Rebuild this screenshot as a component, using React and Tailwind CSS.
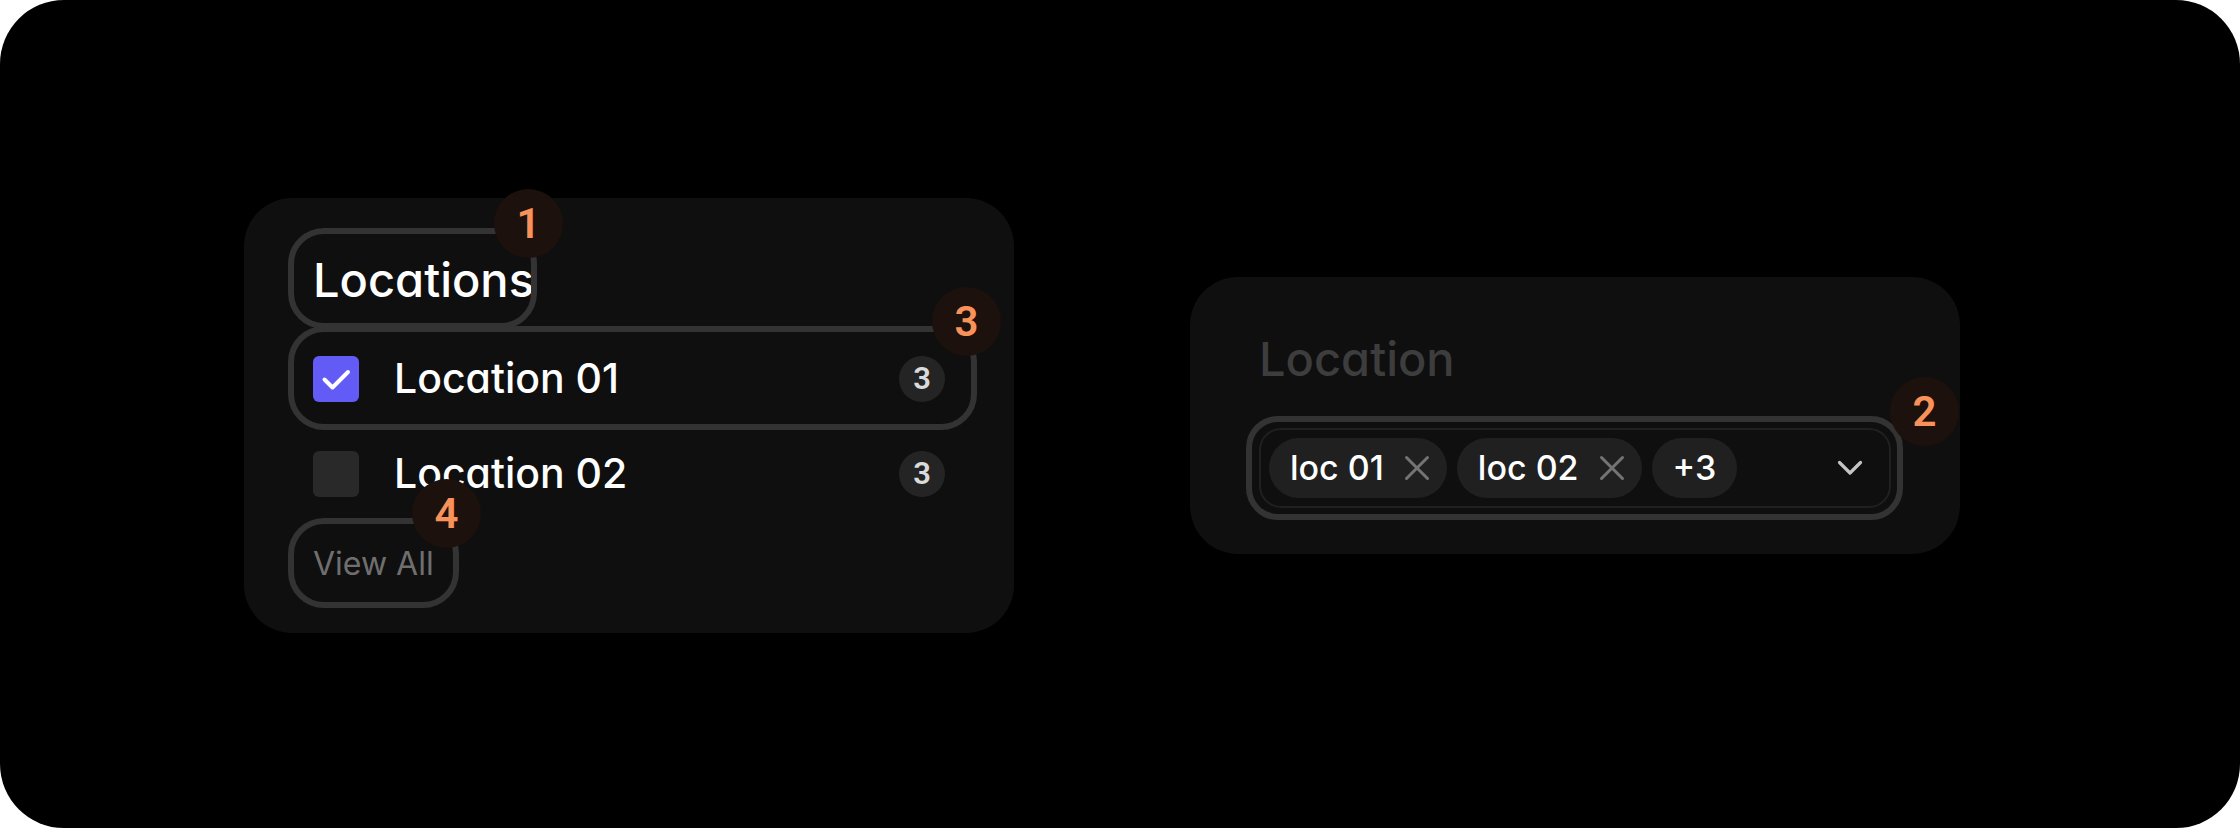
import React, { useState } from 'react';

const LOCATIONS = [
    { id: 'loc-01', name: 'Location 01', count: 3 },
    { id: 'loc-02', name: 'Location 02', count: 3 }
];

const Marker = ({ children, className }) => (
    <span
        className={`absolute -top-[45px] z-10 w-[69px] h-[69px] rounded-full bg-[#1c110c] text-[#f9925a] font-[Roboto,sans-serif] text-[42px] leading-none font-semibold flex items-center justify-center pt-[2px] ${className}`}
    >
        {children}
    </span>
);

const LocationRow = ({ location, checked, onToggle }) => (
    <div className="flex-1 flex items-center justify-between">
        <label htmlFor={location.id} className="flex items-center gap-[35px] text-[41px] leading-none font-medium text-white">
            <span className="relative flex">
                <input
                    id={location.id}
                    type="checkbox"
                    checked={checked}
                    onChange={onToggle}
                    className="appearance-none w-[46px] h-[46px] rounded-md bg-[#292929] checked:bg-[#635bf6]"
                />
                {checked && (
                    <svg className="absolute inset-0 pointer-events-none" width="46" height="46" viewBox="0 0 46 46" fill="none">
                        <path d="M11.5 23.5L19.5 31.5L35 16" stroke="white" strokeWidth="4" strokeLinecap="round" strokeLinejoin="round" />
                    </svg>
                )}
            </span>
            {location.name}
        </label>
        <span className="w-[46px] h-[46px] rounded-full bg-[#242424] text-[#dadada] font-[Roboto,sans-serif] text-[31px] leading-none font-semibold flex items-center justify-center">
            {location.count}
        </span>
    </div>
);

const Chip = ({ label, onRemove }) => (
    <span className={`h-[60px] flex items-center gap-5 rounded-full bg-[#202020] text-[34px] leading-none font-medium text-white ${onRemove ? 'pl-[21px] pr-[17px]' : 'px-[21px]'}`}>
        {label}
        {onRemove && (
            <button type="button" aria-label={`Remove ${label}`} onClick={onRemove}>
                <svg width="26" height="26" viewBox="0 0 26 26" fill="none">
                    <path d="M2.5 2.5L23.5 23.5M23.5 2.5L2.5 23.5" stroke="#747474" strokeWidth="3" strokeLinecap="round" />
                </svg>
            </button>
        )}
    </span>
);

const FilterCard = () => {
    const [selected, setSelected] = useState(['loc-01']);

    const toggle = (id) => {
        setSelected(prev => prev.includes(id) ? prev.filter(s => s !== id) : [...prev, id]);
    };

    return (
        <section className="rounded-[48px] bg-[#0f0f0f] pt-[30px] pb-[25px] pl-11 pr-[37px] flex flex-col items-start">
            {/* Title */}
            <div className="relative h-[101px] w-[249px] rounded-[36px] border-6 border-[#333333] flex items-center pl-[19px] pt-[2px]">
                <h2 className="w-full overflow-x-clip text-[47px] leading-none font-medium text-white">Locations</h2>
                <Marker className="-right-8">1</Marker>
            </div>

            {/* Options */}
            <div className="relative -mt-[3px] h-[104px] w-full rounded-[36px] border-6 border-[#333333] flex pl-[19px] pr-[26px] pt-[2px]">
                <LocationRow
                    location={LOCATIONS[0]}
                    checked={selected.includes(LOCATIONS[0].id)}
                    onToggle={() => toggle(LOCATIONS[0].id)}
                />
                <Marker className="-right-[30px]">3</Marker>
            </div>
            <div className="h-[88px] w-full flex pl-[25px] pr-8">
                <LocationRow
                    location={LOCATIONS[1]}
                    checked={selected.includes(LOCATIONS[1].id)}
                    onToggle={() => toggle(LOCATIONS[1].id)}
                />
            </div>

            <div className="relative h-[90px] w-[171px] rounded-[36px] border-6 border-[#333333] flex items-center pl-[19px] pt-[2px]">
                <button type="button" className="text-[32px] leading-none text-[#6f6f6f] whitespace-nowrap">View All</button>
                <Marker className="-right-7">4</Marker>
            </div>
        </section>
    );
};

const SelectCard = () => {
    const [chips, setChips] = useState(['loc 01', 'loc 02']);

    return (
        <section className="rounded-[48px] bg-[#0f0f0f] pt-[58px] pb-[34px] pl-14 pr-[57px]">
            <h2 className="pl-[13px] text-[47px] leading-[48px] font-medium text-[#3d3d3d]">Location</h2>
            <div className="relative mt-[33px] rounded-[32px] border-6 border-[#333333] p-[6px] pl-[7px]">
                <div className="h-20 rounded-[22px] border-2 border-[#202020] flex items-center gap-[10px] pl-2 pr-[26px]">
                    {chips.map(chip => (
                        <Chip
                            key={chip}
                            label={chip}
                            onRemove={() => setChips(prev => prev.filter(c => c !== chip))}
                        />
                    ))}
                    <Chip label="+3" />
                    <button type="button" aria-label="Show locations" className="ml-auto">
                        <svg width="26" height="26" viewBox="0 0 26 26" fill="none">
                            <path d="M2.5 7.5L13 18L23.5 7.5" stroke="#c4c4c4" strokeWidth="3.2" strokeLinecap="round" strokeLinejoin="round" />
                        </svg>
                    </button>
                </div>
                <Marker className="-right-[62px]">2</Marker>
            </div>
        </section>
    );
};

const App = () => (
    <div className="bg-white">
        <main className="min-h-screen rounded-[64px] bg-black grid grid-cols-2 items-center gap-44 pl-61 pr-70 pt-[2px] font-[Inter,sans-serif] [font-feature-settings:'cv11']">
            <FilterCard />
            <SelectCard />
        </main>
    </div>
);

export default App;
